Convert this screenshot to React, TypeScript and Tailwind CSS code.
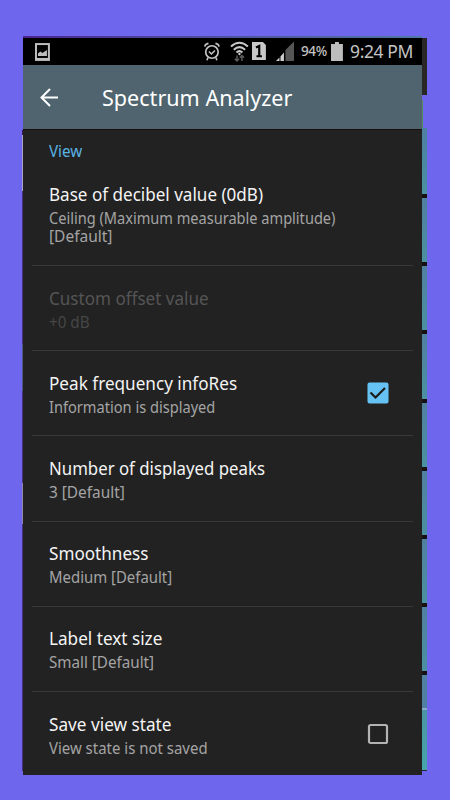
import React, { useState } from 'react';
import clsx from 'clsx';

type Preference = {
  title: string;
  titleScale: string;
  summary: string;
  summaryScale: string;
  disabled?: boolean;
  checkbox?: boolean;
};

const preferences: Preference[] = [
  { title: 'Custom offset value', titleScale: 'scale-x-[0.948]', summary: '+0 dB', summaryScale: 'scale-x-[0.98]', disabled: true },
  { title: 'Peak frequency infoRes', titleScale: 'scale-x-[0.952]', summary: 'Information is displayed', summaryScale: 'scale-x-[0.942]', checkbox: true },
  { title: 'Number of displayed peaks', titleScale: 'scale-x-[0.933]', summary: '3 [Default]', summaryScale: 'scale-x-[0.993]' },
  { title: 'Smoothness', titleScale: 'scale-x-[0.95]', summary: 'Medium [Default]', summaryScale: 'scale-x-[0.963]' },
  { title: 'Label text size', titleScale: 'scale-x-[0.953]', summary: 'Small [Default]', summaryScale: 'scale-x-[0.98]' },
  { title: 'Save view state', titleScale: 'scale-x-[0.955]', summary: 'View state is not saved', summaryScale: 'scale-x-[0.965]', checkbox: true },
];

function StatusBar() {
  return (
    <div className="flex h-[27px] items-center bg-black pl-3 pr-[9px] text-[#c4c4c4]">
      <svg width="15" height="18" viewBox="0 0 15 18">
        <rect x="1" y="1" width="13" height="15" fill="none" stroke="#bdbdbd" strokeWidth="2" />
        <path d="M3 13V10.500L5.500 8.500L7.500 10L12 7V13Z" fill="#bdbdbd" />
        <path d="M0 15.500H15V18H0Z" fill="#bdbdbd" />
      </svg>

      <svg className="ml-[154px]" width="16" height="19" viewBox="0 0 16 19" fill="none" stroke="#c4c4c4">
        <circle cx="8" cy="10" r="6.300" strokeWidth="1.700" />
        <path d="M0.800 4.500Q1.300 1.800 4.500 1.300M15.200 4.500Q14.700 1.800 11.500 1.300M4 15.500L3 18.300M12 15.500L13 18.300" strokeWidth="1.600" />
        <path d="M5 9.500L7.500 12L11 8.500" strokeWidth="1.600" />
      </svg>

      <svg className="-mt-px ml-[10px]" width="19" height="21" viewBox="0 0 19 21" fill="none" stroke="#c9c9c9">
        <path d="M1 5.500Q9.500 -2 18 5.500" strokeWidth="2" />
        <path d="M3.800 8.700Q9.500 3.500 15.200 8.700" strokeWidth="2" />
        <path d="M6.500 11.500Q9.500 8.700 12.500 11.500" strokeWidth="2" />
        <circle cx="9.500" cy="13" r="1.200" fill="#c9c9c9" stroke="none" />
        <path d="M7 14.500V20M4.800 17.700L7 20L9.200 17.700M12 20V14.500M9.800 16.800L12 14.500L14.200 16.800" stroke="#5c5c5c" strokeWidth="1.500" />
      </svg>

      <svg className="-mt-px ml-[3px]" width="14" height="18" viewBox="0 0 14 18">
        <path d="M0 0H11L14 3V18H0Z" fill="#c8c8c8" />
        <path d="M4 5.500L7.300 4V15M4.500 14.300H10" fill="none" stroke="#000" strokeWidth="2.200" />
      </svg>

      <svg className="-mt-px ml-[10px]" width="19" height="20" viewBox="0 0 19 20">
        <path d="M18.500 0V20H9.500V9Z" fill="#555" />
        <path d="M0 20L3.500 16.500V20ZM4.500 20V15.500L8 11.500V20Z" fill="#d0d0d0" />
      </svg>

      <span className="ml-[6.500px] w-7 whitespace-nowrap text-[13.500px] font-medium tracking-[-0.300px]">94%</span>

      <svg className="-mt-px ml-[2.500px]" width="12" height="19" viewBox="0 0 12 19">
        <path d="M4 0H8V2H12V19H0V2H4Z" fill="#bdbdbd" />
      </svg>

      <span className="ml-[7px] whitespace-nowrap text-[17.500px] tracking-[-0.4px]">9:24 PM</span>
    </div>
  );
}

function Toolbar() {
  return (
    <div className="flex h-16 items-center bg-[#4f646e] pl-[17px]">
      <svg width="19" height="19" viewBox="0 0 19 19" fill="none" stroke="#fff" strokeWidth="2">
        <path d="M10 1L1.500 9.500L10 18M1.500 9.500H18" />
      </svg>
      <h1 className="ml-[43px] origin-left scale-x-[0.98] whitespace-nowrap text-[22px] leading-8 text-white">Spectrum Analyzer</h1>
    </div>
  );
}

function Checkbox({ checked }: { checked: boolean }) {
  return (
    <svg width="22" height="22" viewBox="0 0 22 22" fill="none">
      {checked ? (
        <>
          <rect x="0.500" y="0.500" width="21" height="21" rx="2" fill="#65c2f2" />
          <path d="M3.500 10.500L8.500 15.500L18 6" stroke="#1b1b1b" strokeWidth="2.200" />
        </>
      ) : (
        <rect x="2" y="2" width="18" height="18" rx="1.500" stroke="#b3b3b3" strokeWidth="2.200" />
      )}
    </svg>
  );
}

// Slice of the screen behind the panel that stays visible on the right
function EdgeStrip() {
  return (
    <div className="flex w-[5px] flex-col pt-[2px]">
      <div className="h-[57px] bg-[#292725]" />
      <div className="h-[5px]" />
      <div className="h-[28px] w-px bg-[#528c60]" />
      <div className="h-[66px] bg-linear-to-b from-[#4d80a0] to-[#4b91a1]" />
      {[0, 1, 2, 3, 4, 5, 6].map((i) => (
        <div key={i} className="h-[68.200px] border-t-4 border-[#161010] bg-linear-to-b from-[#5080a0] to-[#4b91a1]" />
      ))}
      <div className="h-[37px] border-t-4 border-[#161010] bg-[#5081a2]" />
      <div className="h-[2px] bg-[#8aa9cb]" />
      <div className="h-[60px] bg-linear-to-b from-[#4b94a5] to-[#45a6a8]" />
      <div className="h-px bg-[#292540]" />
    </div>
  );
}

export default function App() {
  const [checked, setChecked] = useState<Record<string, boolean>>({ 'Peak frequency infoRes': true });

  return (
    <div className="flex h-[800px] w-[450px] overflow-hidden bg-[#6e67ee] pl-[22px] pt-9 font-['Noto_Sans',sans-serif]">
      <div className="flex w-px flex-col pt-[94px]">
        <div className="h-[5px] bg-[#3b1c54]" />
        <div className="h-14 bg-[#aaa3c5]" />
        <div className="h-[153px] bg-[#4a307f]" />
        <div className="h-[47px] bg-[#4b587d]" />
        <div className="h-[92px] bg-[#4a307f]" />
        <div className="h-[41px] bg-[#9187a8]" />
        <div className="h-[247px] bg-[#4a307f]" />
      </div>
      <div className="h-[739px] w-[399px] bg-[#222]">
        <div className="h-[2px] bg-linear-to-r from-[#492392] to-[#5078a5]" />
        <StatusBar />
        <Toolbar />
        <div className="h-px bg-[#170e0d]" />

        <div className="h-[136px] px-[9px]">
          <div className="h-full border-b border-[#393939] pl-[17px]">
            <h2 className="origin-left scale-x-[0.98] pt-[11px] text-[15.500px] leading-5 text-[#5ab3e2]">View</h2>
            <p className="mt-[21px] w-fit origin-left scale-x-[0.948] whitespace-nowrap text-[18px] leading-6 text-[#f4f4f4]">
              Base of decibel value (0dB)
            </p>
            <div className="mt-[3px] whitespace-nowrap text-[15.500px] leading-[18px] text-[#a4a4a4]">
              <p className="w-fit origin-left scale-x-[0.94]">Ceiling (Maximum measurable amplitude)</p>
              <p className="w-fit">[Default]</p>
            </div>
          </div>
        </div>

        {preferences.map((item, i) => {
          const last = i === preferences.length - 1;
          return (
            <div key={item.title} className={clsx('px-[9px]', last ? 'h-[82px]' : 'h-[85.2px]')}>
              <div
                className={clsx(
                  'flex h-full items-start justify-between pl-[17px] pr-6',
                  !last && 'border-b border-[#393939]'
                )}
              >
                <div className="pt-[19.600px]">
                  <p className={clsx('w-fit origin-left whitespace-nowrap text-[18px] leading-6', item.titleScale, item.disabled ? 'text-[#555]' : 'text-[#f4f4f4]')}>
                    {item.title}
                  </p>
                  <p className={clsx('mt-px w-fit origin-left whitespace-nowrap text-[15.500px] leading-[22px]', item.summaryScale, item.disabled ? 'text-[#464646]' : 'text-[#a4a4a4]')}>
                    {item.summary}
                  </p>
                </div>
                {item.checkbox && (
                  <button
                    type="button"
                    role="checkbox"
                    aria-checked={!!checked[item.title]}
                    aria-label={item.title}
                    onClick={() => setChecked({ ...checked, [item.title]: !checked[item.title] })}
                    className="mt-[31px]"
                  >
                    <Checkbox checked={!!checked[item.title]} />
                  </button>
                )}
              </div>
            </div>
          );
        })}
      </div>
      <EdgeStrip />
    </div>
  );
}
